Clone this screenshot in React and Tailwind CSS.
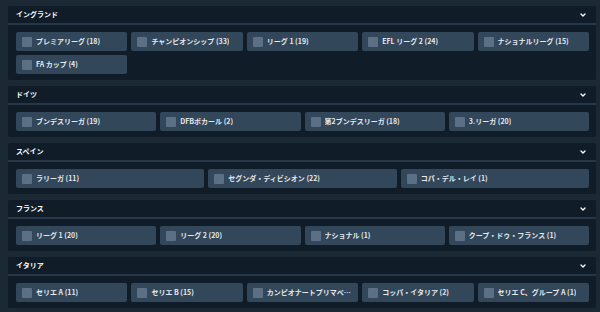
import React from 'react';
import { ChevronDown } from 'lucide-react';

const sections = [
  {
    name: 'イングランド',
    cols: 'grid-cols-5',
    items: ['プレミアリーグ (18)', 'チャンピオンシップ (33)', 'リーグ 1 (19)', 'EFL リーグ 2 (24)', 'ナショナルリーグ (15)', 'FA カップ (4)'],
  },
  {
    name: 'ドイツ',
    cols: 'grid-cols-4',
    items: ['ブンデスリーガ (19)', 'DFBポカール (2)', '第2ブンデスリーガ (18)', '3.リーガ (20)'],
  },
  {
    name: 'スペイン',
    cols: 'grid-cols-3',
    items: ['ラリーガ (11)', 'セグンダ・ディビシオン (22)', 'コパ・デル・レイ (1)'],
  },
  {
    name: 'フランス',
    cols: 'grid-cols-4',
    items: ['リーグ 1 (20)', 'リーグ 2 (20)', 'ナショナル (1)', 'クープ・ドゥ・フランス (1)'],
  },
  {
    name: 'イタリア',
    cols: 'grid-cols-5',
    items: ['セリエ A (11)', 'セリエ B (15)', 'カンピオナートプリマベーラ (3)', 'コッパ・イタリア (2)', 'セリエ C、グループ A (1)'],
  },
];

const LeagueButton = ({ label }) => (
  <div className="h-[19px] flex items-center gap-[4px] pl-[6px] pr-[4px] bg-[#33475a] rounded-[2px] min-w-0">
    <span className="w-[10px] h-[10px] shrink-0 bg-[#5b6f85] rounded-[1px]" />
    <span className="truncate text-[7px] font-bold text-[#e4e9ee]">{label}</span>
  </div>
);

const Section = ({ section }) => (
  <div className="bg-[#101c27] rounded-[2px] shrink-0">
    <div className="h-[19px] flex items-center justify-between pl-[8px] pr-[9px] border-b-2 border-[#27374a]">
      <span className="text-[7px] font-bold text-white">{section.name}</span>
      <ChevronDown size={8} strokeWidth={4} className="text-white" />
    </div>
    <div className={`grid ${section.cols} gap-x-[4px] gap-y-[4px] pl-[8px] pr-[7px] pt-[7px] pb-[6px]`}>
      {section.items.map((it) => (
        <LeagueButton key={it} label={it} />
      ))}
    </div>
  </div>
);

export default function App() {
  return (
    <div
      className="w-[600px] h-[312px] overflow-hidden bg-[#1b2935] pl-[8px] pr-[4px] pt-[6px] flex flex-col gap-[6px]"
      style={{ fontFamily: '"Noto Sans CJK JP", "Liberation Sans", sans-serif' }}
    >
      {sections.map((s) => (
        <Section key={s.name} section={s} />
      ))}
    </div>
  );
}
